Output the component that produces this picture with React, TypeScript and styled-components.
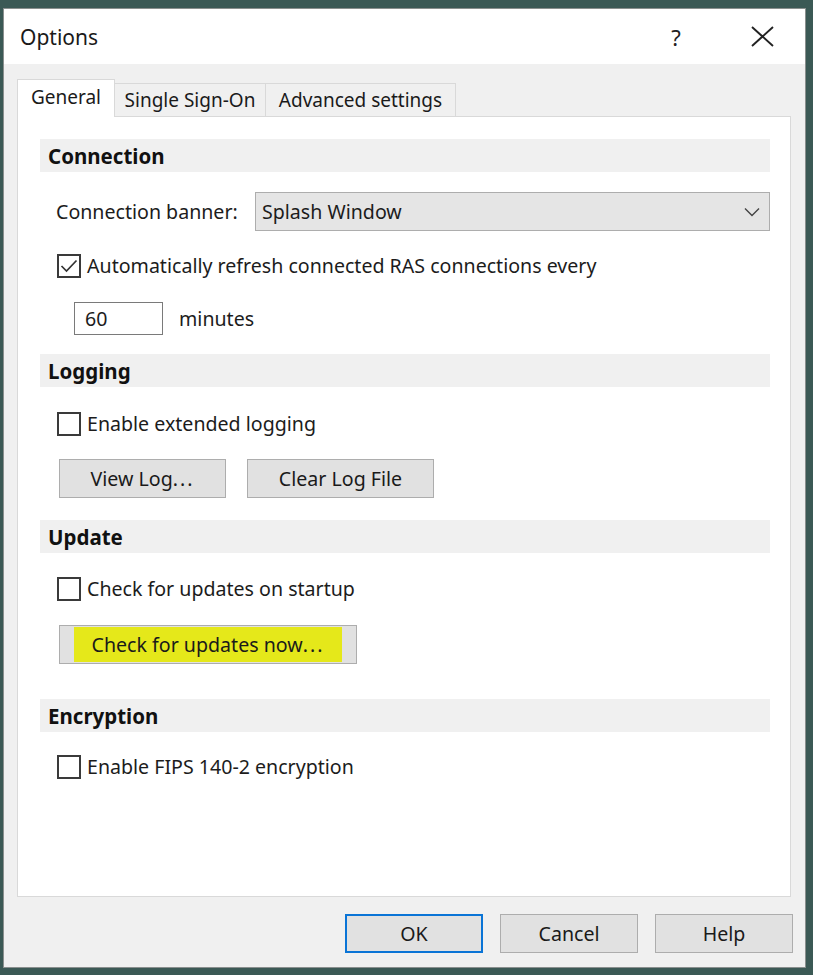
import React from "react";
import styled, { createGlobalStyle } from "styled-components";

const GlobalStyle = createGlobalStyle`
  html, body { margin: 0; padding: 0; }
  body {
    background: #3b5955;
    font-family: "Noto Sans", "Open Sans", sans-serif;
    color: #1c1c1c;
  }
  #root { padding: 8px 7px 7px 3px; }
`;

const Dialog = styled.div`
  width: 803px;
  height: 960px;
  background: #f0f0f0;
  border: 1px solid #8a8f8e;
  box-sizing: border-box;
  display: flex;
  flex-direction: column;
`;

const TitleBar = styled.div`
  height: 56px;
  background: #ffffff;
  display: flex;
  align-items: center;
  padding-left: 16px;
`;

const Title = styled.div`
  flex: 1;
  font-size: 21px;
  color: #1a1a1a;
`;

const HelpMark = styled.div`
  width: 24px;
  text-align: center;
  font-size: 22px;
  color: #222;
  margin-right: 62px;
`;

const CloseButton = styled.div`
  width: 24px;
  display: flex;
  justify-content: center;
  align-items: center;
  margin-right: 31px;
`;

const Body = styled.div`
  flex: 1;
  display: flex;
  flex-direction: column;
  padding: 15px 14px 14px 13px;
`;

const TabStrip = styled.div`
  display: flex;
  align-items: flex-end;
  height: 38px;
  position: relative;
  z-index: 1;
`;

const Tab = styled.div<{ $active?: boolean; $w: number }>`
  width: ${(p) => p.$w}px;
  height: ${(p) => (p.$active ? 38 : 34)}px;
  box-sizing: border-box;
  background: ${(p) => (p.$active ? "#ffffff" : "#f0f0f0")};
  border: 1px solid #d9d9d9;
  border-bottom: ${(p) => (p.$active ? "none" : "1px solid #d9d9d9")};
  margin-left: ${(p) => (p.$active ? 0 : -1)}px;
  display: flex;
  align-items: center;
  justify-content: center;
  font-size: 19px;
  color: #1a1a1a;
  padding-bottom: ${(p) => (p.$active ? 4 : 0)}px;
`;

const Panel = styled.div`
  height: 781px;
  margin-top: -1px;
  background: #ffffff;
  border: 1px solid #d9d9d9;
  box-sizing: border-box;
  padding: 22px 20px 0 22px;
  display: flex;
  flex-direction: column;
`;

const SectionHeader = styled.div<{ $mt?: number }>`
  height: 33px;
  background: #f0f0f0;
  display: flex;
  align-items: center;
  padding-left: 8px;
  font-weight: 700;
  font-size: 20.5px;
  color: #111;
  margin-top: ${(p) => p.$mt ?? 0}px;
`;

const Row = styled.div<{ $mt: number; $ml: number }>`
  display: flex;
  align-items: center;
  margin-top: ${(p) => p.$mt}px;
  margin-left: ${(p) => p.$ml}px;
  font-size: 19.6px;
  line-height: 24px;
  color: #1c1c1c;
`;

const Label = styled.span`
  width: 199px;
`;

const Select = styled.div`
  flex: 1;
  height: 39px;
  box-sizing: border-box;
  background: #e5e5e5;
  border: 1px solid #adadad;
  display: flex;
  align-items: center;
  padding-left: 6px;
  padding-right: 9px;
  justify-content: space-between;
`;

const Box = styled.div`
  width: 24px;
  height: 24px;
  box-sizing: border-box;
  border: 2px solid #3a3a3a;
  background: #fff;
  display: flex;
  align-items: center;
  justify-content: center;
  margin-right: 6px;
`;

const TextInput = styled.div`
  width: 89px;
  height: 33px;
  box-sizing: border-box;
  border: 1px solid #7a7a7a;
  display: flex;
  align-items: center;
  padding-left: 10px;
  margin-right: 16px;
`;

const Buttons = styled.div<{ $mt: number }>`
  display: flex;
  gap: 21px;
  margin-top: ${(p) => p.$mt}px;
  margin-left: 19px;
`;

const Btn = styled.div<{ $w: number; $primary?: boolean }>`
  width: ${(p) => p.$w}px;
  height: 39px;
  box-sizing: border-box;
  background: #e1e1e1;
  border: ${(p) => (p.$primary ? "2px solid #0a74d6" : "1px solid #adadad")};
  display: flex;
  align-items: center;
  justify-content: center;
  font-size: 19.6px;
  color: #1a1a1a;
`;

const WideDots = styled.span`
  letter-spacing: 2px;
`;

const Highlight = styled.span`
  background: #e5e81a;
  height: 35px;
  display: flex;
  align-items: center;
  padding: 0 18px;
`;

const Footer = styled.div`
  display: flex;
  justify-content: flex-end;
  gap: 17px;
  margin-top: 17px;
  margin-right: -2px;
`;

const Check = ({ checked }: { checked?: boolean }) => (
  <Box>
    {checked && (
      <svg width="18" height="16" viewBox="0 0 18 16">
        <path d="M1.5 8 L6.5 13 L16.5 2.5" fill="none" stroke="#333" strokeWidth="1.7" />
      </svg>
    )}
  </Box>
);

export default function App() {
  return (
    <>
      <GlobalStyle />
      <Dialog>
        <TitleBar>
          <Title>Options</Title>
          <HelpMark>?</HelpMark>
          <CloseButton>
            <svg width="23" height="21" viewBox="0 0 23 21">
              <path d="M1 1 L22 20 M22 1 L1 20" stroke="#222" strokeWidth="1.9" />
            </svg>
          </CloseButton>
        </TitleBar>
        <Body>
          <TabStrip>
            <Tab $active $w={98}>General</Tab>
            <Tab $w={152}>Single Sign-On</Tab>
            <Tab $w={191}>Advanced settings</Tab>
          </TabStrip>
          <Panel>
            <SectionHeader>Connection</SectionHeader>
            <Row $mt={20} $ml={16}>
              <Label>Connection banner:</Label>
              <Select>
                <span>Splash Window</span>
                <svg width="16" height="10" viewBox="0 0 16 10">
                  <path d="M1 1.5 L8 8.5 L15 1.5" fill="none" stroke="#444" strokeWidth="1.4" />
                </svg>
              </Select>
            </Row>
            <Row $mt={23} $ml={17}>
              <Check checked />
              <span>Automatically refresh connected RAS connections every</span>
            </Row>
            <Row $mt={24} $ml={34}>
              <TextInput>60</TextInput>
              <span>minutes</span>
            </Row>
            <SectionHeader $mt={19}>Logging</SectionHeader>
            <Row $mt={25} $ml={17}>
              <Check />
              <span>Enable extended logging</span>
            </Row>
            <Buttons $mt={23}>
              <Btn $w={167}>
                <span>
                  View Log<WideDots>...</WideDots>
                </span>
              </Btn>
              <Btn $w={187}>Clear Log File</Btn>
            </Buttons>
            <SectionHeader $mt={22}>Update</SectionHeader>
            <Row $mt={24} $ml={17}>
              <Check />
              <span>Check for updates on startup</span>
            </Row>
            <Buttons $mt={24}>
              <Btn $w={298}>
                <Highlight>
                  <span>
                    Check for updates now<WideDots>...</WideDots>
                  </span>
                </Highlight>
              </Btn>
            </Buttons>
            <SectionHeader $mt={35}>Encryption</SectionHeader>
            <Row $mt={23} $ml={17}>
              <Check />
              <span>Enable FIPS 140-2 encryption</span>
            </Row>
          </Panel>
          <Footer>
            <Btn $w={138} $primary>OK</Btn>
            <Btn $w={138}>Cancel</Btn>
            <Btn $w={138}>Help</Btn>
          </Footer>
        </Body>
      </Dialog>
    </>
  );
}
